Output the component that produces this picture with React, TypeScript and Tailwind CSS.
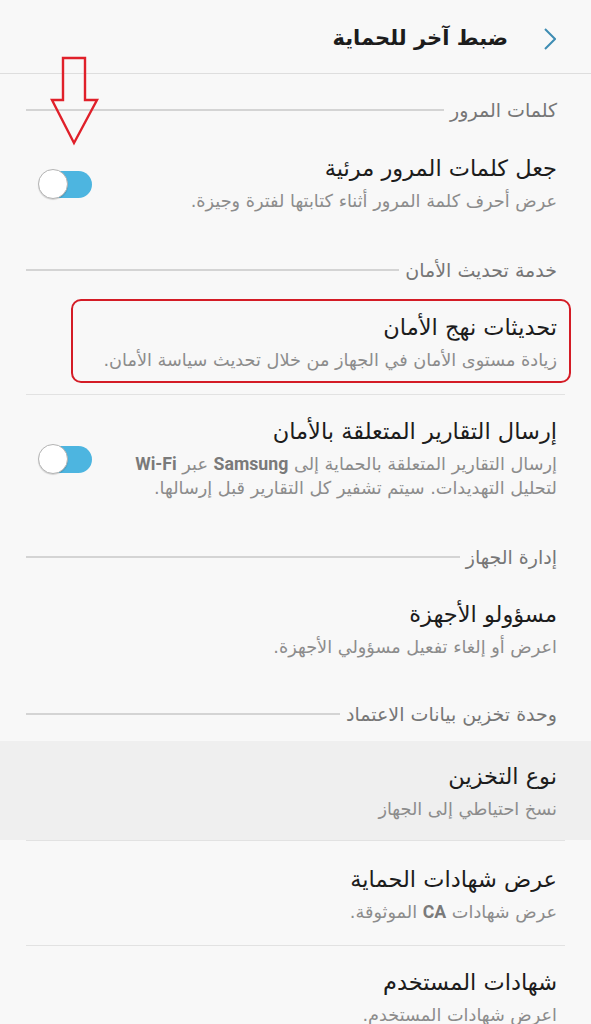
import React from 'react';

const Toggle: React.FC = () => (
    <div className="relative h-[30px] w-[54px] shrink-0">
        <div className="absolute right-0 top-[2px] h-[27px] w-[50px] rounded-full bg-[#4db5e0]" />
        <div className="absolute left-0 top-0 h-[30px] w-[30px] rounded-full border-[1.5px] border-[#b4b4b4] bg-white shadow-[0_1px_1px_rgba(0,0,0,0.15)]" />
    </div>
);

const SectionHeader: React.FC<{ label: string; className: string }> = ({
    label,
    className,
}) => (
    <div className={`flex items-center pl-[26px] pr-[34px] ${className}`}>
        <span className="shrink-0 text-[19px] leading-[24px] text-[#767676]">
            {label}
        </span>
        <div className="mr-[6px] h-[1.5px] flex-1 bg-[#d4d4d4]" />
    </div>
);

const Divider: React.FC = () => (
    <div className="mx-[26px] h-px bg-[#e2e2e2]" />
);

const Item: React.FC<{
    title: string;
    children: React.ReactNode;
    className: string;
    toggle?: boolean;
}> = ({ title, children, className, toggle }) => (
    <div className={`flex items-center pl-[38px] pr-[34px] ${className}`}>
        <div className="flex-1">
            <div className="text-[22.5px] leading-[28px] text-[#1c1c1c]">
                {title}
            </div>
            <div className="mt-[7px] text-[17.7px] leading-[24px] text-[#8c8c8c]">
                {children}
            </div>
        </div>
        {toggle ? <Toggle /> : null}
    </div>
);

const Latin: React.FC<{ children: React.ReactNode }> = ({ children }) => (
    <span className="font-['Roboto',sans-serif] font-bold text-[#7a7a7a]">
        {children}
    </span>
);

export default function App() {
    return (
        <div
            dir="rtl"
            className="relative h-[1024px] w-[591px] overflow-hidden bg-[#f8f8f8] font-['DejaVu_Sans',sans-serif]"
        >
            {/* header */}
            <div className="flex h-[74px] items-center gap-[36px] border-b border-[#dedede] px-[35px] pt-[4px]">
                <svg width="12" height="22" viewBox="0 0 12 22" className="shrink-0">
                    <polyline
                        points="1,1 11,11 1,21"
                        fill="none"
                        stroke="#3f8db3"
                        strokeWidth="2"
                    />
                </svg>
                <div className="text-[21px] font-bold text-[#1c1c1c]">
                    ضبط آخر للحماية
                </div>
            </div>

            <SectionHeader label="كلمات المرور" className="pt-[24px]" />
            <Item
                title="جعل كلمات المرور مرئية"
                className="pb-[22px] pt-[32px]"
                toggle
            >
                عرض أحرف كلمة المرور أثناء كتابتها لفترة وجيزة.
            </Item>

            <SectionHeader label="خدمة تحديث الأمان" className="pt-[23px]" />
            <div className="relative">
                <Item title="تحديثات نهج الأمان" className="pb-[22px] pt-[31px]">
                    زيادة مستوى الأمان في الجهاز من خلال تحديث سياسة الأمان.
                </Item>
                <div className="pointer-events-none absolute bottom-[11px] left-[71px] top-[17px] w-[500px] rounded-[10px] border-2 border-[#d41c26]" />
            </div>
            <Divider />
            <Item
                title="إرسال التقارير المتعلقة بالأمان"
                className="pb-[22px] pt-[22px]"
                toggle
            >
                إرسال التقارير المتعلقة بالحماية إلى <Latin>Samsung</Latin> عبر{' '}
                <Latin>Wi-Fi</Latin>
                <br />
                لتحليل التهديدات. سيتم تشفير كل التقارير قبل إرسالها.
            </Item>

            <SectionHeader label="إدارة الجهاز" className="pt-[23px]" />
            <Item title="مسؤولو الأجهزة" className="pb-[22px] pt-[31px]">
                اعرض أو إلغاء تفعيل مسؤولي الأجهزة.
            </Item>

            <SectionHeader
                label="وحدة تخزين بيانات الاعتماد"
                className="pb-[15px] pt-[21px]"
            />
            <Item title="نوع التخزين" className="bg-[#efefef] pb-[19px] pt-[21px]">
                نسخ احتياطي إلى الجهاز
            </Item>
            <Divider />
            <Item title="عرض شهادات الحماية" className="pb-[21px] pt-[24px]">
                عرض شهادات <Latin>CA</Latin> الموثوقة.
            </Item>
            <Divider />
            <Item title="شهادات المستخدم" className="pb-[22px] pt-[22px]">
                اعرض شهادات المستخدم.
            </Item>

            {/* annotation arrow */}
            <svg
                width="50"
                height="90"
                viewBox="0 0 50 90"
                className="pointer-events-none absolute left-[50px] top-[56px]"
            >
                <polygon
                    points="13,2 35,2 35,44 47,44 24,87 2,44 13,44"
                    fill="none"
                    stroke="#e0202a"
                    strokeWidth="2.4"
                    strokeLinejoin="miter"
                />
            </svg>
        </div>
    );
}
